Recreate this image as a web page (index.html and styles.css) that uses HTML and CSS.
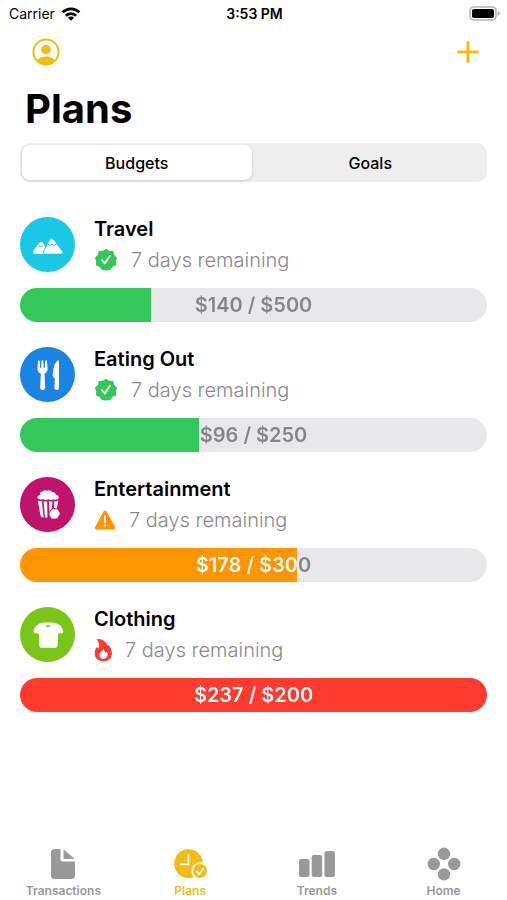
FILE: index.html
```
<!DOCTYPE html>
<html lang="en">
<head>
    <meta charset="UTF-8">
    <meta name="viewport" content="width=device-width, initial-scale=1.0">
    <title>Plans</title>
    <link rel="stylesheet" href="styles.css">
</head>
<body>
    <div class="status-bar">
        <div class="carrier">
            <span>Carrier</span>
            <svg width="20" height="14" viewBox="0 0 20 14" fill="none" stroke="#000" stroke-width="2.7">
                <path d="M1.6 5.3a12 12 0 0 1 16.8 0"/>
                <path d="M4.8 8.7a7.4 7.4 0 0 1 10.4 0"/>
                <path d="M10 13.8 6.9 10.7a4.4 4.4 0 0 1 6.2 0z" fill="#000" stroke="none"/>
            </svg>
        </div>
        <div class="time">3:53 PM</div>
        <div class="battery">
            <svg width="31" height="15" viewBox="0 0 31 15">
                <rect x="1" y="1" width="26" height="13" rx="4" fill="#fff" stroke="#b5b5b5" stroke-width="1.6"/>
                <rect x="3" y="3" width="22" height="9" rx="2" fill="#000"/>
                <path d="M28.6 5q2.2.6 2.2 2.5t-2.2 2.5z" fill="#b5b5b5"/>
            </svg>
        </div>
    </div>

    <header class="nav-bar">
        <button type="button" class="icon-btn" aria-label="Profile">
            <svg width="28" height="28" viewBox="0 0 28 28">
                <circle cx="14" cy="14" r="12.6" fill="none" stroke="#f1bd14" stroke-width="2"/>
                <circle cx="14" cy="11.6" r="4.9" fill="#f1bd14"/>
                <path d="M4.6 22.2Q8.2 18.4 14 18.4t9.4 3.8Q19.6 26.8 14 26.8T4.6 22.2z" fill="#f1bd14"/>
            </svg>
        </button>
        <button type="button" class="icon-btn" aria-label="Add plan">
            <svg width="28" height="28" viewBox="0 0 28 28" stroke="#f1bd14" stroke-width="3" stroke-linecap="round">
                <path d="M14 4.600v18.800M4.600 14h18.800"/>
            </svg>
        </button>
    </header>

    <main>
        <h1>Plans</h1>

        <div class="segmented">
            <button type="button" class="segment active">Budgets</button>
            <button type="button" class="segment">Goals</button>
        </div>

        <div class="budgets">
            <section class="budget">
                <div class="budget-header">
                    <span class="category travel">
                        <svg width="32" height="32" viewBox="0 0 32 32">
                            <path d="M1.600 21.500 7 14q2.200-2.600 4.400 0l4 9.500-1.600 1.500H3Q.2 24.600 1.600 21.500z" fill="#fff"/>
                            <path d="M11.800 22 17.700 10.500q2-2.700 4 0l3 4.200 5.900 7.800q1.200 2.400-1.600 2.600H13q-2.400-.4-1.200-3.100z" fill="#fff" stroke="#1ac7e4" stroke-width=".8"/>
                            <path d="m15.800 15 2.200 1.400 1.900-1.500 2 1.500 2.600-1.500M6.400 17l2.200.9 2.200-1.100" fill="none" stroke="#1ac7e4" stroke-width="1"/>
                        </svg>
                    </span>
                    <div class="budget-info">
                        <h2>Travel</h2>
                        <p>
                            <svg width="24" height="24" viewBox="0 0 24 24">
                                <path d="M12 1.800 15 3.600l3.700.2.800 3.600L22.200 10l-1.200 2.900.4 3.900-3.500 1.500-2.200 3L12 21.600l-3.700-.3-2.200-3-3.500-1.500.4-3.900L1.800 10l2.700-2.600.8-3.600L9 3.600z" fill="#34c759" stroke="#34c759" stroke-width="1.600" stroke-linejoin="round"/>
                                <path d="m8 12.200 2.800 3.200 5-7.400" fill="none" stroke="#fff" stroke-width="1.900" stroke-linecap="round" stroke-linejoin="round"/>
                            </svg>
                            <span>7 days remaining</span>
                        </p>
                    </div>
                </div>
                <div class="bar good" style="--spent: 28%"><span>$140 / $500</span></div>
            </section>

            <section class="budget">
                <div class="budget-header">
                    <span class="category eating">
                        <svg width="32" height="32" viewBox="0 0 32 32" fill="#fff">
                            <path d="M6 1.800q.9-1 1.700 0l.4 7h1.100l.3-7q.9-1 1.800 0l.3 7h1.100l.5-7q.9-1 1.700 0l.7 8q.2 3.200-3.100 4.800l.7 14.200q-.3 2.200-2.600 2.200t-2.500-2.200l.7-14.200q-3.500-1.600-3.300-4.800z"/>
                            <path d="M25.800 1.200q1.200 0 1.200 1.400v26.200q-.2 2.300-2.400 2.300t-2.300-2.300l.6-9.500q-2.200-.6-2.200-3 .2-11.200 5.100-15.100z"/>
                        </svg>
                    </span>
                    <div class="budget-info">
                        <h2>Eating Out</h2>
                        <p>
                            <svg width="24" height="24" viewBox="0 0 24 24">
                                <path d="M12 1.800 15 3.600l3.700.2.800 3.600L22.200 10l-1.200 2.900.4 3.900-3.500 1.500-2.200 3L12 21.600l-3.700-.3-2.200-3-3.500-1.500.4-3.900L1.800 10l2.700-2.600.8-3.600L9 3.600z" fill="#34c759" stroke="#34c759" stroke-width="1.600" stroke-linejoin="round"/>
                                <path d="m8 12.200 2.800 3.200 5-7.400" fill="none" stroke="#fff" stroke-width="1.900" stroke-linecap="round" stroke-linejoin="round"/>
                            </svg>
                            <span>7 days remaining</span>
                        </p>
                    </div>
                </div>
                <div class="bar good" style="--spent: 38.4%"><span>$96 / $250</span></div>
            </section>

            <section class="budget">
                <div class="budget-header">
                    <span class="category fun">
                        <svg width="32" height="32" viewBox="0 0 32 32" fill="#fff">
                            <path d="M5.600 9.600Q4.600 6.600 8 6 7.600 3 10.600 2.600 12.400.2 15 1.800q3.400-1.500 5 1.200 3.400-.4 3.600 2.600 4 1 2.800 4.200-2.600 1.600-5 .4-2.500 1.500-5 0-2.700 1.500-5.400 0-2.800 1-5.400-.6z"/>
                            <path d="M5.800 11.600q2 1 4 .4l1.800 16.400q-2.800 0-3.200-2.200zM11.600 12.200q1.600.7 3.500 0l.4 16.400h-2.500zM17 12.200q1.800.8 3.500 0l-.7 7.300q-3 1.600-2.300 5.200zM22.300 12q2 .5 4-.4l-1.400 8-3-.5z"/>
                            <path d="M18.800 22q1.400-3 4.300-1.500 3.300-.8 3.500 2 2.500 2.300 0 4.200-.8 3.400-3.900 2.800-3 1.200-4-1.600-2.800-3 .1-5.900z"/>
                        </svg>
                    </span>
                    <div class="budget-info">
                        <h2>Entertainment</h2>
                        <p>
                            <svg width="22" height="24" viewBox="0 0 22 24">
                                <path d="M11 4.200 2.600 19.800h17.200z" fill="#ff9500" stroke="#ff9500" stroke-width="3.400" stroke-linejoin="round"/>
                                <path d="M11 8.300v6" stroke="#fff" stroke-width="2" stroke-linecap="round"/>
                                <circle cx="11" cy="17.400" r="1.200" fill="#fff"/>
                            </svg>
                            <span>7 days remaining</span>
                        </p>
                    </div>
                </div>
                <div class="bar warning" style="--spent: 59.3%"><span>$178 / $300</span></div>
            </section>

            <section class="budget">
                <div class="budget-header">
                    <span class="category clothing">
                        <svg width="32" height="32" viewBox="0 0 32 32">
                            <path d="M11.500 3.600h9q5 .8 7.400 2.600 2.400 2 3.400 6.400 0 1.200-1.200 1.600l-4 .6-.4 12q-.2 2-2.300 2H9.600q-2.200 0-2.300-2l-.4-12-4-.6q-1.600-.4-1.400-1.600 1-4.400 3.200-6.400 2.200-1.800 6.800-2.600z" fill="#fff"/>
                            <path d="M13 6.600h6.200q-3 3.600-6.200 0z" fill="#7ac515"/>
                        </svg>
                    </span>
                    <div class="budget-info">
                        <h2>Clothing</h2>
                        <p>
                            <svg width="18" height="24" viewBox="0 0 18 24">
                                <path d="M2.500 1.300Q8 .2 11.600 4.200q1.300 1.500 1.800 3.600l1.200-.8q3.400 4 3.300 9-.5 7-8.400 7.500Q1 23.300.6 15.300q.2-3.700 2.200-6.600.6 1.400 1.800 1.700 1.800-5.200-2.100-9.100z" fill="#ff3b30"/>
                                <path d="M9.500 10.600q.5 2.400 2.200 4.300l1.100-1.300q1.100 2 .6 4-1 3.300-4 3.300-3.600-.2-4-3.700.2-2 1.700-3.400 2-1.500 2.400-3.200z" fill="#fff"/>
                            </svg>
                            <span>7 days remaining</span>
                        </p>
                    </div>
                </div>
                <div class="bar over" style="--spent: 100%"><span>$237 / $200</span></div>
            </section>
        </div>
    </main>

    <nav class="tab-bar">
        <a href="#transactions" class="tab">
            <svg width="36" height="34" viewBox="0 0 36 34" fill="#999">
                <path d="M9.500 2h6v10.500q0 2 2 2H30V28.500q0 3.500-3.500 3.500h-17Q6 32 6 28.500v-23Q6 2 9.500 2z"/>
                <path d="M18.500 2.300 29.700 12H19.500q-1 0-1-1z"/>
            </svg>
            <span>Transactions</span>
        </a>
        <a href="#plans" class="tab active">
            <svg width="36" height="34" viewBox="0 0 36 34">
                <circle cx="16.500" cy="16.600" r="14.300" fill="#f1bd14"/>
                <path d="M16.500 8v9.400H8.500" fill="none" stroke="#fff" stroke-width="1.600" stroke-linecap="round"/>
                <circle cx="28" cy="24" r="7.800" fill="#f1bd14" stroke="#fff" stroke-width="1.700"/>
                <path d="m24.600 24.400 2.500 3 4-6" fill="none" stroke="#fff" stroke-width="1.800" stroke-linecap="round" stroke-linejoin="round"/>
            </svg>
            <span>Plans</span>
        </a>
        <a href="#trends" class="tab">
            <svg width="36" height="34" viewBox="0 0 36 34" fill="#999">
                <rect x="0" y="12" width="10.500" height="18" rx="2.500"/>
                <rect x="12.700" y="8" width="10.500" height="22" rx="2.500"/>
                <rect x="25.400" y="4" width="10.500" height="26" rx="2.500"/>
            </svg>
            <span>Trends</span>
        </a>
        <a href="#home" class="tab">
            <svg width="36" height="34" viewBox="0 0 36 34" fill="#999">
                <circle cx="18" cy="6.800" r="6.200"/>
                <circle cx="7.800" cy="17" r="6.200"/>
                <circle cx="28.200" cy="17" r="6.200"/>
                <circle cx="18" cy="27.400" r="6.200"/>
            </svg>
            <span>Home</span>
        </a>
    </nav>
</body>
</html>
```

FILE: styles.css
```
* {
    box-sizing: border-box;
}

body {
    margin: 0;
    min-height: 100vh;
    display: flex;
    flex-direction: column;
    background: #fff;
    color: #000;
    font-family: Inter, "Liberation Sans", sans-serif;
}

h1, h2, p {
    margin: 0;
}

svg {
    display: block;
    flex: none;
}

button {
    padding: 0;
    border: none;
    background: none;
    color: inherit;
    font-family: inherit;
    cursor: pointer;
}

.status-bar {
    display: grid;
    grid-template-columns: 1fr auto 1fr;
    align-items: center;
    height: 27px;
    padding: 0 7px 0 9px;
    font-size: 14px;
}

.carrier {
    display: flex;
    align-items: center;
    gap: 6px;
}

.time {
    font-weight: 600;
}

.battery {
    justify-self: end;
}

.nav-bar {
    display: flex;
    justify-content: space-between;
    align-items: center;
    height: 50px;
    padding: 0 25px 0 32px;
}

main {
    flex: 1;
    padding: 8px 20px 0;
}

h1 {
    padding-left: 5px;
    font-size: 40px;
    line-height: 48px;
    font-weight: 700;
}

.segmented {
    display: flex;
    gap: 4px;
    height: 39px;
    margin-top: 10px;
    padding: 2px;
    border-radius: 10px;
    background: #eee;
}

.segment {
    flex: 1;
    border-radius: 8px;
    font-size: 16px;
    font-weight: 500;
}

.segment.active {
    background: #fff;
    box-shadow: 0 1px 3px rgba(0, 0, 0, 0.15);
}

.budgets {
    display: flex;
    flex-direction: column;
    gap: 25px;
    margin-top: 35px;
}

.budget-header {
    display: flex;
    align-items: center;
    gap: 19px;
    margin-bottom: 16px;
}

.category {
    display: flex;
    align-items: center;
    justify-content: center;
    width: 55px;
    height: 55px;
    border-radius: 50%;
}

.travel {
    background: #1ac7e4;
}

.eating {
    background: #1b83e4;
}

.fun {
    background: #c2136a;
}

.clothing {
    background: #7ac515;
}

.budget-info h2 {
    font-size: 20px;
    line-height: 24px;
    font-weight: 600;
}

.budget-info p {
    display: flex;
    align-items: center;
    gap: 13px;
    margin-top: 7px;
    color: #8a8a8c;
    font-size: 20px;
    line-height: 24px;
    font-weight: 300;
}

.bar {
    height: 34px;
    border-radius: 17px;
    background: linear-gradient(to right, var(--fill) var(--spent), #e8e8eb var(--spent));
}

/* the label turns white where the filled part runs under it */
.bar span {
    display: block;
    background: linear-gradient(to right, #fff var(--spent), #858588 var(--spent));
    -webkit-background-clip: text;
    background-clip: text;
    color: transparent;
    font-size: 20px;
    line-height: 34px;
    font-weight: 600;
    text-align: center;
}

.good {
    --fill: #34c759;
}

.warning {
    --fill: #ff9500;
}

.over {
    --fill: #ff3b30;
}

.tab-bar {
    display: flex;
    padding-bottom: 1px;
}

.tab {
    flex: 1;
    display: flex;
    flex-direction: column;
    align-items: center;
    gap: 2px;
    color: #999;
    font-size: 12px;
    line-height: 16px;
    font-weight: 600;
    text-decoration: none;
}

.tab.active {
    color: #f1bd14;
}
```
